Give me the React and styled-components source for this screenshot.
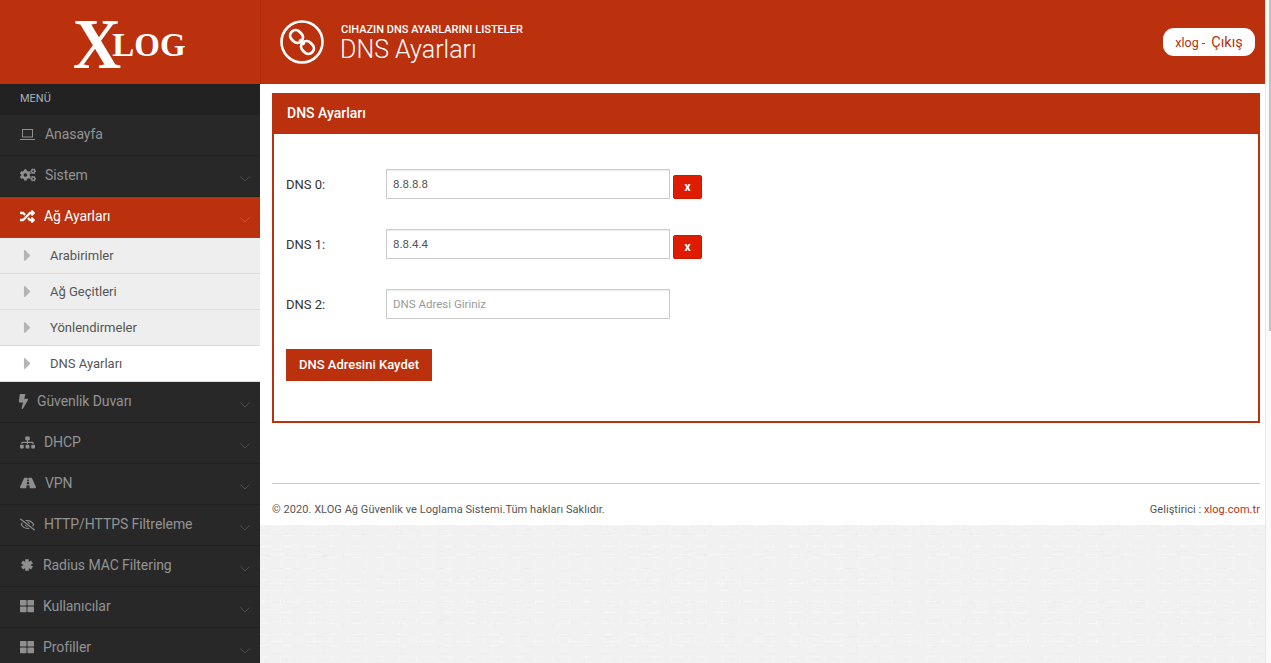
import React from 'react';
import styled, { createGlobalStyle } from 'styled-components';
import { FaCogs, FaRandom, FaBolt, FaSitemap, FaRoad, FaRegEyeSlash, FaThLarge, FaCaretRight } from 'react-icons/fa';

const Global = createGlobalStyle`
  html, body { margin: 0; padding: 0; height: 100%; overflow: hidden; }
  body { font-family: Roboto, "Liberation Sans", sans-serif; background: #fff; }
  * { box-sizing: border-box; }
`;

const Brick = '#bb300d';

const Shell = styled.div`display: flex; width: 1271px; height: 663px; overflow: hidden;`;
const Frame = styled.div`flex: 1; display: flex; flex-direction: column; min-width: 0;`;
const ScrollTrack = styled.div`
  width: 6px; background: #fafafa; border-left: 1px solid #e8e8e8; display: flex; justify-content: flex-end;
`;
const ScrollThumb = styled.div`width: 2px; height: 331px; background: #c1c1c1;`;

const TopBar = styled.header`display: flex; height: 84px; background: ${Brick}; color: #fff; flex: none;`;
const Brand = styled.div`
  width: 261px; border-right: 1px solid #a92b0c; display: flex; align-items: flex-start; justify-content: center;
  padding: 0 5px 0 0; font-family: "Liberation Serif", serif; overflow: hidden;
`;
const BrandX = styled.span`font-size: 72px; font-weight: 700; line-height: 88px; display: inline-block; transform: scaleX(0.93); transform-origin: right center; margin-right: -9px;`;
const BrandRest = styled.span`font-size: 33px; font-weight: 700; line-height: 90px;`;

const PageHead = styled.div`flex: 1; display: flex; align-items: center; padding: 0 10px 0 19px;`;
const Titles = styled.div`margin-left: 16px; flex: 1; margin-top: 3px;`;
const Subtitle = styled.div`font-size: 11px; font-weight: 500; line-height: 13px; text-transform: uppercase; margin-left: 1px;`;
const Title = styled.h1`margin: 0; font-size: 25px; font-weight: 300; line-height: 28px;`;
const UserPill = styled.div`
  width: 92px; height: 28px; border-radius: 11px; background: #fff; color: ${Brick}; padding-top: 1px;
  display: flex; align-items: center; justify-content: center; gap: 6px; font-size: 12.5px;
`;
const Logout = styled.span`font-size: 14.5px;`;

const Body = styled.div`flex: 1; display: flex; min-height: 0;`;
const Sidebar = styled.nav`width: 260px; flex: none; background: #282828; overflow: hidden;`;
const MenuLabel = styled.div`
  height: 31px; background: #222; color: #a9b0b8; font-size: 11px; padding: 0 20px 2px; display: flex; align-items: center;
`;
const Item = styled.div`
  height: 41px; display: flex; align-items: center; padding: 0 8px 2px 20px;
  background: ${p => (p.$active ? Brick : '#282828')};
  color: ${p => (p.$active ? '#fff' : '#939393')};
  border-bottom: 1px solid ${p => (p.$active ? Brick : '#222')};
  font-size: 14px; letter-spacing: -0.08px;
`;
const ItemIcon = styled.span`
  width: ${p => p.$w}px; margin-right: 10px; flex: none; display: flex; align-items: center; justify-content: center;
  font-size: ${p => p.$size || 14}px;
  color: ${p => (p.$active ? '#fff' : '#8f8f8f')};
  & > svg { flex: none; }
`;
const ItemText = styled.span`flex: 1;`;
const Chevron = styled.svg`width: 10px; height: 6px; flex: none; margin-top: 7px; margin-right: 2px;`;
const SubMenu = styled.div`background: #eee;`;
const SubItem = styled.div`
  height: 36px; display: flex; align-items: center; padding-left: 20px; font-size: 13px;
  color: #555; border-bottom: 1px solid #ddd;
  background: ${p => (p.$current ? '#fff' : '#eee')};
`;
const SubCaret = styled.span`
  width: 15px; margin-right: 15px; flex: none; display: flex; justify-content: center; color: #b4b4b4; font-size: 19px;
  & > svg { flex: none; }
`;

const dash = (w, h, c) => `conic-gradient(from 270deg at ${w}px ${h}px, ${c} 0 90deg, transparent 0)`;
const lite = 'rgba(255,255,255,.28)';
const dark = 'rgba(0,0,0,.012)';
const Main = styled.main`
  flex: 1; min-width: 0; display: flex; flex-direction: column;
  background-color: #f1f1f1;
  background-image:
    ${dash(9, 1, lite)}, ${dash(1, 6, lite)}, ${dash(14, 1, lite)},
    ${dash(6, 1, dark)}, ${dash(1, 5, dark)}, ${dash(11, 1, dark)};
  background-size: 23px 11px, 17px 19px, 37px 29px, 29px 13px, 19px 23px, 41px 17px;
  background-position: 0 0, 3px 2px, 11px 6px, 5px 3px, 7px 9px, 13px 8px;
`;
const Content = styled.div`background: #fff; padding: 9px 5px 0 12px; height: 441px; flex: none;`;
const Panel = styled.section`border: 2px solid ${Brick}; border-top: 0;`;
const PanelHead = styled.div`
  height: 41px; margin: 0 -2px; background: ${Brick}; color: #fff; font-size: 14px; font-weight: 500;
  display: flex; align-items: center; padding: 0 0 2px 15px;
`;
const PanelBody = styled.div`padding: 35px 12px 40px; display: flex; flex-direction: column; align-items: flex-start; gap: 30px;`;
const Row = styled.div`display: flex; align-items: flex-start;`;
const FieldLabel = styled.label`width: 100px; font-size: 13px; line-height: 32px; height: 30px; color: #333;`;
const Input = styled.input`
  width: 284px; height: 30px; border: 1px solid #ccc; box-shadow: inset 0 1px 1px rgba(0,0,0,.08); padding: 0 6px;
  font-family: inherit; font-size: 11.5px; color: #555; outline: none; background: #fff;
  &::placeholder { color: #999; opacity: 1; }
`;
const RemoveBtn = styled.button`
  width: 29px; height: 24px; margin: 6px 0 0 3px; border: 1px solid #cc1a00; border-radius: 2px; background: #e01c00;
  color: #fff; font-family: inherit; font-size: 12px; font-weight: 700; padding: 0 0 1px;
`;
const SaveBtn = styled.button`
  width: 146px; height: 32px; border: 0; background: ${Brick}; color: #fff; font-family: inherit; font-size: 13px; font-weight: 500; padding: 0 0 2px;
`;
const FooterRule = styled.hr`margin: 60px 0 0; border: 0; border-top: 1px solid #ccc;`;
const FooterRow = styled.footer`
  display: flex; justify-content: space-between; font-size: 11px; line-height: 14px; color: #555; margin-top: 19px; letter-spacing: 0.05px;
`;
const FooterLink = styled.span`color: ${Brick};`;

const Angle = ({ color }) => (
  <Chevron viewBox="0 0 10 6"><path d="M0.5 0.5 L5 5 L9.5 0.5" fill="none" stroke={color} strokeWidth="0.8" /></Chevron>
);
const Laptop = () => (
  <svg width="15" height="11" viewBox="0 0 15 11" fill="none" stroke="currentColor" strokeWidth="1">
    <rect x="2.5" y="0.5" width="10" height="7.5" />
    <path d="M0 10.5 H15" />
  </svg>
);
const Star = () => (
  <svg width="12" height="12" viewBox="0 0 12 12" stroke="currentColor" strokeWidth="3.6">
    <path d="M6 0.3 V11.7 M1 3 L11 9 M11 3 L1 9" />
  </svg>
);
const ChainBadge = () => (
  <svg width="44" height="44" viewBox="0 0 44 44" fill="none" stroke="#fff" style={{ flex: 'none' }}>
    <circle cx="22" cy="22" r="20.5" strokeWidth="2.6" />
    <g strokeWidth="2.8" transform="rotate(45 22 22)">
      <rect x="7.5" y="16.5" width="13.5" height="11" rx="5.5" />
      <rect x="23" y="16.5" width="13.5" height="11" rx="5.5" />
      <path d="M18.5 22 H25.5" />
    </g>
  </svg>
);

const topItems = [
  { text: 'Anasayfa', icon: <Laptop />, w: 15, noChevron: true },
  { text: 'Sistem', icon: <FaCogs />, w: 15, size: 16 },
  { text: 'Ağ Ayarları', icon: <FaRandom />, w: 14 , size: 15, active: true },
];
const subItems = ['Arabirimler', 'Ağ Geçitleri', 'Yönlendirmeler', 'DNS Ayarları'];
const lowerItems = [
  { text: 'Güvenlik Duvarı', icon: <FaBolt />, w: 7, size: 15 },
  { text: 'DHCP', icon: <FaSitemap />, w: 14, size: 15 },
  { text: 'VPN', icon: <FaRoad />, w: 15, size: 16 },
  { text: 'HTTP/HTTPS Filtreleme', icon: <FaRegEyeSlash />, w: 14, size: 15 },
  { text: 'Radius MAC Filtering', icon: <Star />, w: 13 },
  { text: 'Kullanıcılar', icon: <FaThLarge />, w: 13, size: 14 },
  { text: 'Profiller', icon: <FaThLarge />, w: 13, size: 14 },
];
const fields = [
  { label: 'DNS 0:', value: '8.8.8.8', removable: true },
  { label: 'DNS 1:', value: '8.8.4.4', removable: true },
  { label: 'DNS 2:', placeholder: 'DNS Adresi Giriniz' },
];

const NavItem = ({ item }) => (
  <Item $active={item.active}>
    <ItemIcon $w={item.w} $size={item.size} $active={item.active}>{item.icon}</ItemIcon>
    <ItemText>{item.text}</ItemText>
    {!item.noChevron && <Angle color={item.active ? '#d2583a' : '#555'} />}
  </Item>
);

export default function App() {
  return (
    <>
      <Global />
      <Shell>
        <Frame>
          <TopBar>
            <Brand><BrandX>X</BrandX><BrandRest>LOG</BrandRest></Brand>
            <PageHead>
              <ChainBadge />
              <Titles>
                <Subtitle>Cihazın DNS Ayarlarını Listeler</Subtitle>
                <Title>DNS Ayarları</Title>
              </Titles>
              <UserPill>xlog - <Logout>Çıkış</Logout></UserPill>
            </PageHead>
          </TopBar>
          <Body>
            <Sidebar>
              <MenuLabel>MENÜ</MenuLabel>
              {topItems.map(i => <NavItem key={i.text} item={i} />)}
              <SubMenu>
                {subItems.map((s, idx) => (
                  <SubItem key={s} $current={idx === 3}>
                    <SubCaret><FaCaretRight /></SubCaret>{s}
                  </SubItem>
                ))}
              </SubMenu>
              {lowerItems.map(i => <NavItem key={i.text} item={i} />)}
            </Sidebar>
            <Main>
              <Content>
                <Panel>
                  <PanelHead>DNS Ayarları</PanelHead>
                  <PanelBody>
                    {fields.map(f => (
                      <Row key={f.label}>
                        <FieldLabel>{f.label}</FieldLabel>
                        <Input defaultValue={f.value} placeholder={f.placeholder} />
                        {f.removable && <RemoveBtn>x</RemoveBtn>}
                      </Row>
                    ))}
                    <SaveBtn>DNS Adresini Kaydet</SaveBtn>
                  </PanelBody>
                </Panel>
                <FooterRule />
                <FooterRow>
                  <span>© 2020. XLOG Ağ Güvenlik ve Loglama Sistemi.Tüm hakları Saklıdır.</span>
                  <span>Geliştirici : <FooterLink>xlog.com.tr</FooterLink></span>
                </FooterRow>
              </Content>
            </Main>
          </Body>
        </Frame>
        <ScrollTrack><ScrollThumb /></ScrollTrack>
      </Shell>
    </>
  );
}
